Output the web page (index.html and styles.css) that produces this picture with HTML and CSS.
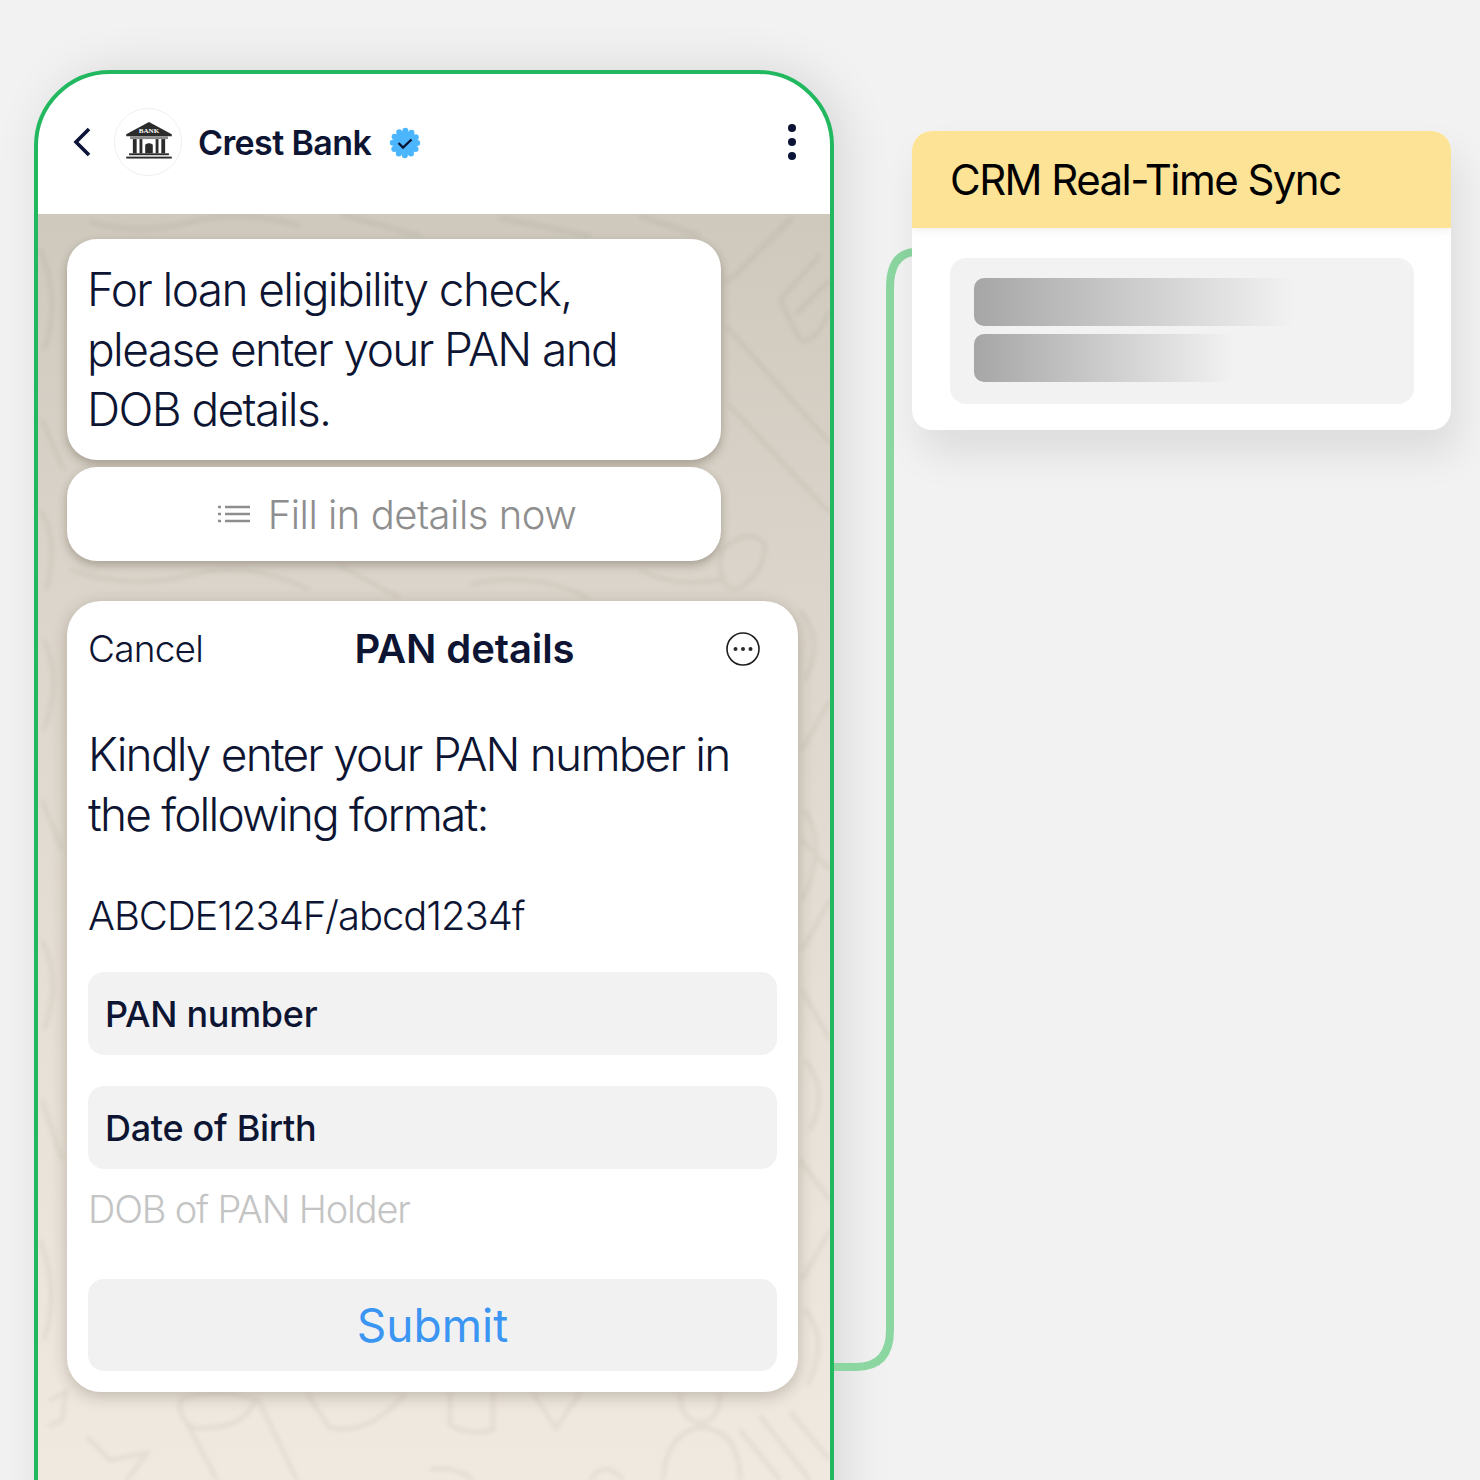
FILE: index.html
```html
<!DOCTYPE html>
<html lang="en">
<head>
    <meta charset="UTF-8">
    <title>Crest Bank</title>
    <link rel="stylesheet" href="styles.css">
</head>
<body>
    <svg class="connector" width="100" height="1160" viewBox="0 0 100 1160">
        <path d="M0 1137 H22 Q56 1137 56 1100 V58 Q56 24 80 22" fill="none" stroke="#8bd6a1" stroke-width="8"/>
    </svg>

    <div class="stage">
        <div class="phone">
            <div class="top-bar">
                <svg class="back" width="20" height="34" viewBox="0 0 20 34">
                    <path d="M17 4 L4 17 L17 30" fill="none" stroke="#0b1437" stroke-width="3.6"/>
                </svg>
                <div class="avatar">
                    <svg class="bank-logo" width="48" height="37" viewBox="0 0 50 39">
                        <path d="M25 0 L49 13 V15 H1 V13 Z" fill="#2b2b2b"/>
                        <text class="bank-word" x="25" y="11.5" text-anchor="middle">BANK</text>
                        <rect x="5" y="15" width="40" height="3" fill="#8a8a8a"/>
                        <rect x="8" y="18" width="4" height="15" fill="#2b2b2b"/>
                        <rect x="15" y="18" width="3" height="15" fill="#2b2b2b"/>
                        <rect x="32" y="18" width="3" height="15" fill="#2b2b2b"/>
                        <rect x="38" y="18" width="4" height="15" fill="#2b2b2b"/>
                        <path d="M21 33 V24 Q25 21 29 24 V33 Z" fill="#2b2b2b"/>
                        <rect x="4" y="33" width="42" height="2" fill="#2b2b2b"/>
                        <rect x="1" y="36.5" width="48" height="2" fill="#2b2b2b"/>
                    </svg>
                </div>
                <span class="bank-name">Crest Bank</span>
                <svg class="verified" width="32" height="32" viewBox="0 0 32 32">
                    <circle cx="16" cy="16" r="12" fill="#4bb6fd"/>
                    <circle cx="16" cy="16" r="12.2" fill="none" stroke="#4bb6fd" stroke-width="6" stroke-linecap="round" stroke-dasharray="0 6.39"/>
                    <path d="M9.5 16 L14 20.5 L22.5 12.5" fill="none" stroke="#0b1437" stroke-width="2.4"/>
                </svg>
                <div class="menu-dots"><i></i><i></i><i></i></div>
            </div>

            <div class="chat">
                <svg class="doodles" width="792" height="1266" viewBox="38 214 792 1266">
                    <g fill="none" stroke="#807865" stroke-width="4">
                        <path d="M727 283 L793 217"/>
                        <path d="M727 327 L830 443"/>
                        <path d="M727 403 L830 513"/>
                        <path d="M780 300 L820 255 M795 315 L830 280 M800 340 Q815 345 830 310 M780 300 L800 340"/>
                        <path d="M722 550 Q750 525 765 545 Q765 575 735 590 Q715 585 722 550 Z"/>
                        <path d="M90 222 Q140 236 190 222 T300 226 M340 214 L420 236 M500 218 L590 236 M640 216 L700 236"/>
                        <path d="M70 570 Q130 590 190 575 T310 590 M340 566 L400 598 M470 585 Q530 570 590 598 M640 570 Q680 590 725 578"/>
                        <path d="M40 250 Q62 300 44 350 M42 420 L64 470 M40 510 Q60 540 46 590 M44 640 Q62 680 44 730 M42 800 L62 850 M42 940 Q62 980 44 1030 M42 1100 L62 1160 M40 1240 Q60 1290 44 1340"/>
                        <path d="M800 610 Q826 640 805 680 M830 700 L802 750 M805 810 Q828 850 802 900 M802 840 L830 870 M830 900 L802 950 M802 990 L830 1040 M805 1060 Q830 1090 810 1130 M800 1160 L830 1200 M830 1230 L802 1280 M805 1310 Q830 1340 808 1385"/>
                        <path d="M180 1400 Q215 1385 255 1400 Q245 1430 195 1428 Q178 1420 180 1400 Z"/>
                        <path d="M257 1397 L297 1480 M187 1423 L217 1480"/>
                        <path d="M307 1394 L330 1428 Q370 1435 405 1394"/>
                        <path d="M87 1437 L110 1460 L147 1453 L127 1480"/>
                        <path d="M50 1400 L66 1392 L62 1420 L48 1426"/>
                        <path d="M450 1393 V1425 Q470 1436 493 1430 V1393"/>
                        <path d="M533 1393 L556 1428 L580 1393"/>
                        <path d="M680 1393 Q680 1420 700 1423 Q720 1420 720 1393"/>
                        <path d="M663 1480 Q665 1435 700 1427 Q740 1430 740 1480"/>
                        <path d="M740 1430 L780 1480 M760 1416 L810 1480 M790 1412 L830 1460"/>
                        <path d="M590 1480 Q605 1458 623 1480 M430 1470 Q455 1465 473 1480"/>
                    </g>
                </svg>

                <div class="bubble">For loan eligibility check, please enter your PAN and DOB details.</div>
                <div class="bubble-action">
                    <svg width="34" height="20" viewBox="0 0 34 20">
                        <path d="M8 3 H33 M8 10 H33 M8 17 H33" stroke="#8e8e8e" stroke-width="2.4"/>
                        <path d="M1 3 H4 M1 10 H4 M1 17 H4" stroke="#8e8e8e" stroke-width="2.4"/>
                    </svg>
                    <span>Fill in details now</span>
                </div>

                <div class="form-card">
                    <div class="form-head">
                        <span class="cancel">Cancel</span>
                        <span class="form-title">PAN details</span>
                        <svg width="34" height="34" viewBox="0 0 34 34">
                            <circle cx="17" cy="17" r="16" fill="none" stroke="#1c1c1c" stroke-width="1.6"/>
                            <circle cx="9.5" cy="17" r="2" fill="#2a2a2a"/>
                            <circle cx="17" cy="17" r="2" fill="#2a2a2a"/>
                            <circle cx="24.5" cy="17" r="2" fill="#2a2a2a"/>
                        </svg>
                    </div>
                    <p class="form-copy">Kindly enter your PAN number in the following format:</p>
                    <p class="form-format">ABCDE1234F/abcd1234f</p>
                    <div class="field">PAN number</div>
                    <div class="field">Date of Birth</div>
                    <div class="field-hint">DOB of PAN Holder</div>
                    <div class="submit">Submit</div>
                </div>
            </div>
        </div>

        <div class="sync-card">
            <div class="sync-head">CRM Real-Time Sync</div>
            <div class="sync-body">
                <div class="sync-panel">
                    <div class="skeleton skeleton-long"></div>
                    <div class="skeleton skeleton-short"></div>
                </div>
            </div>
        </div>
    </div>
</body>
</html>
```
FILE: styles.css
```css
* {
    box-sizing: border-box;
}

html, body {
    margin: 0;
    height: 1480px;
    overflow: hidden;
}

body {
    background: #f2f2f2;
    font-family: 'Inter', 'Liberation Sans', sans-serif;
    color: #0d1533;
    position: relative;
}

.stage {
    display: flex;
    align-items: flex-start;
    height: 1480px;
    overflow: hidden;
    padding: 70px 0 0 34px;
    gap: 78px;
}

.connector {
    position: absolute;
    left: 834px;
    top: 230px;
    z-index: 1;
}

.phone {
    position: relative;
    width: 800px;
    height: 1500px;
    flex: none;
    background: #fff;
    border: 4px solid #22b860;
    border-radius: 76px 76px 0 0;
    box-shadow: 10px 0 50px rgba(0, 0, 0, 0.11);
    overflow: hidden;
}

.top-bar {
    height: 140px;
    display: flex;
    align-items: center;
    padding-left: 34px;
    padding-bottom: 4px;
}

.back {
    margin-right: 22px;
}

.avatar {
    width: 68px;
    height: 68px;
    border-radius: 50%;
    border: 1px solid #efefef;
    display: flex;
    align-items: center;
    justify-content: center;
    margin-right: 16px;
}

.bank-logo {
    margin: 0 0 3px 1px;
}

.bank-word {
    font-family: 'Liberation Serif', serif;
    font-size: 7.5px;
    font-weight: 700;
    fill: #fff;
}

.bank-name {
    font-size: 34px;
    font-weight: 600;
    letter-spacing: -0.6px;
    margin-right: 18px;
}

.verified {
    margin-top: 2px;
}

.menu-dots {
    margin-left: auto;
    margin-right: 34px;
    display: flex;
    flex-direction: column;
    gap: 6px;
}

.menu-dots i {
    display: block;
    width: 8px;
    height: 8px;
    border-radius: 50%;
    background: #0b1437;
}

.chat {
    position: relative;
    height: 1300px;
    padding: 25px 0 0 29px;
    background: linear-gradient(to bottom, #cec8bd 0%, #dcd5cb 30%, #e6dfd5 60%, #f0e9e0 97%);
    overflow: hidden;
}

.doodles {
    position: absolute;
    left: 0;
    top: 0;
    opacity: 0.11;
    filter: blur(2px);
}

.bubble {
    position: relative;
    width: 654px;
    height: 221px;
    padding: 20px 40px 0 20px;
    background: #fff;
    border-radius: 30px;
    font-size: 46px;
    font-weight: 300;
    line-height: 60px;
    letter-spacing: -1.6px;
    box-shadow: 0 4px 10px rgba(50, 40, 20, 0.3);
}

.bubble-action {
    position: relative;
    width: 654px;
    height: 94px;
    margin-top: 7px;
    padding-left: 5px;
    display: flex;
    align-items: center;
    justify-content: center;
    gap: 17px;
    background: #fff;
    border-radius: 30px;
    color: #8e8e8e;
    font-size: 40px;
    font-weight: 300;
    letter-spacing: -0.5px;
    box-shadow: 0 4px 10px rgba(50, 40, 20, 0.3);
}

.form-card {
    position: relative;
    width: 731px;
    height: 791px;
    margin-top: 40px;
    padding: 21px;
    background: #fff;
    border-radius: 34px;
    box-shadow: 0 4px 16px rgba(50, 40, 20, 0.25);
}

.form-head {
    display: flex;
    align-items: center;
    justify-content: space-between;
    padding: 2px 17px 0 0;
}

.cancel {
    font-size: 37px;
    font-weight: 300;
    letter-spacing: -0.8px;
}

.form-title {
    font-size: 40px;
    font-weight: 600;
    letter-spacing: -0.1px;
}

.form-copy {
    margin: 51px 0 0;
    font-size: 46px;
    font-weight: 300;
    line-height: 60px;
    letter-spacing: -1.8px;
}

.form-format {
    margin: 45px 0 0;
    font-size: 40px;
    font-weight: 300;
    line-height: 54px;
    letter-spacing: -1.05px;
}

.field {
    height: 83px;
    margin-top: 31px;
    padding-left: 17px;
    display: flex;
    align-items: center;
    background: #f2f2f3;
    border-radius: 16px;
    font-size: 36px;
    font-weight: 500;
    letter-spacing: -0.3px;
}

.form-format + .field {
    margin-top: 29px;
}

.field-hint {
    margin-top: 16px;
    font-size: 38px;
    font-weight: 300;
    line-height: 48px;
    letter-spacing: -1.2px;
    color: #c4c4c4;
}

.submit {
    height: 92px;
    margin-top: 46px;
    display: flex;
    align-items: center;
    justify-content: center;
    background: #f1f1f2;
    border-radius: 16px;
    color: #3a96f2;
    font-size: 46px;
    font-weight: 400;
}

.sync-card {
    position: relative;
    z-index: 2;
    width: 539px;
    margin-top: 61px;
    background: #fff;
    border-radius: 20px;
    box-shadow: 8px 24px 40px rgba(0, 0, 0, 0.09);
    overflow: hidden;
}

.sync-head {
    height: 97px;
    padding-left: 38px;
    display: flex;
    align-items: center;
    background: #fde396;
    color: #000;
    font-size: 42px;
    font-weight: 400;
    letter-spacing: -1.55px;
    box-shadow: 0 3px 8px rgba(0, 0, 0, 0.06);
    position: relative;
}

.sync-body {
    padding: 30px 37px 26px 38px;
}

.sync-panel {
    height: 146px;
    padding: 20px 24px;
    background: #f2f2f2;
    border-radius: 16px;
    display: flex;
    flex-direction: column;
    gap: 8px;
}

.skeleton {
    height: 48px;
    border-radius: 10px 0 0 10px;
}

.skeleton-long {
    width: 320px;
    background: linear-gradient(to right, #a6a6a6, #f2f2f2);
}

.skeleton-short {
    width: 260px;
    background: linear-gradient(to right, #a6a6a6, #f2f2f2);
}
```
